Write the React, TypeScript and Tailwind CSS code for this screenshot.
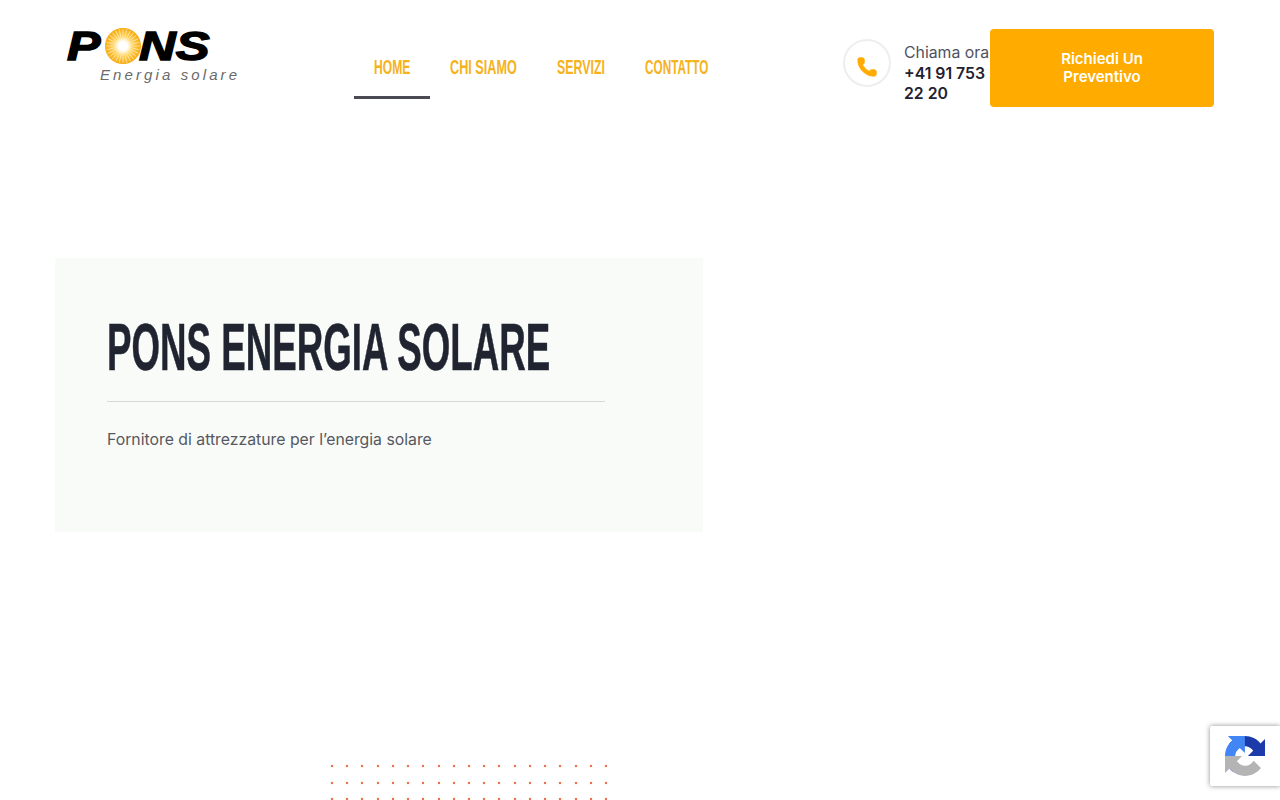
import React from "react";
import { Phone } from "lucide-react";

const navItems = [
  { label: "HOME", width: "w-[36px]", scale: "scale-x-[0.576]", active: true },
  { label: "CHI SIAMO", width: "w-[67px]", scale: "scale-x-[0.603]", active: false },
  { label: "SERVIZI", width: "w-[48px]", scale: "scale-x-[0.59]", active: false },
  { label: "CONTATTO", width: "w-[63px]", scale: "scale-x-[0.56]", active: false },
];

const SunLogo = () => {
  const rays = Array.from({ length: 28 }, (_, i) => (i * 360) / 28);
  return (
    <svg viewBox="0 0 36 36" className="h-[36px] w-[36px] shrink-0">
      <defs>
        <radialGradient id="sun">
          <stop offset="0.28" stopColor="#ffffff" />
          <stop offset="0.5" stopColor="#ffd666" />
          <stop offset="1" stopColor="#f7a90c" />
        </radialGradient>
      </defs>
      <circle cx="18" cy="18" r="18" fill="url(#sun)" />
      {rays.map((deg) => (
        <line
          key={deg}
          x1="18"
          y1="18"
          x2="18"
          y2="1"
          stroke="#fff3cf"
          strokeWidth="0.6"
          transform={`rotate(${deg} 18 18)`}
        />
      ))}
      <circle cx="18" cy="18" r="5" fill="#ffffff" />
    </svg>
  );
};

const Recaptcha = () => (
  <svg viewBox="0 0 64 64" className="h-[40px] w-[40px]">
    <path
      d="M64 31.955l-.033-1.37V4.687l-7.16 7.16C50.948 4.674 42.033.093 32.05.093c-10.4 0-19.622 4.96-25.458 12.64l11.736 11.86a15.55 15.55 0 0 1 4.754-5.334c2.05-1.6 4.952-2.906 8.968-2.906.485 0 .86.057 1.135.163 4.976.393 9.288 3.14 11.828 7.124l-8.307 8.307L64 31.953"
      fill="#1c3aa9"
    />
    <path
      d="M31.862.094l-1.37.033H4.594l7.16 7.16C4.58 13.147 0 22.06 0 32.046c0 10.4 4.96 19.622 12.64 25.458l11.86-11.736a15.55 15.55 0 0 1-5.334-4.754c-1.6-2.05-2.906-4.952-2.906-8.968 0-.485.057-.86.163-1.135.393-4.976 3.14-9.288 7.124-11.828l8.307 8.307L31.86.095"
      fill="#4285f4"
    />
    <path
      d="M.001 32.045l.033 1.37v25.898l7.16-7.16c5.86 7.173 14.774 11.754 24.76 11.754 10.4 0 19.622-4.96 25.458-12.64l-11.736-11.86a15.55 15.55 0 0 1-4.754 5.334c-2.05 1.6-4.952 2.906-8.968 2.906-.485 0-.86-.057-1.135-.163-4.976-.393-9.288-3.14-11.828-7.124l8.307-8.307c-10.522.001-22.4.001-27.295-.001"
      fill="#b4b4b4"
    />
  </svg>
);

const App: React.FC = () => {
  const dots = Array.from({ length: 57 }, (_, i) => i);

  return (
    <div className="relative h-[800px] overflow-hidden bg-white font-['Inter',sans-serif]">
      <header className="flex h-[107px] items-start">
        {/* logo */}
        <div className="ml-[67px] mt-[28px] w-[173px] shrink-0">
          <div className="flex h-[36px] items-center text-[40px] font-bold italic leading-none text-black [-webkit-text-stroke:1.4px_black] font-['Liberation_Sans',sans-serif]">
            <span className="w-[38px] origin-left scale-x-[1.25]">P</span>
            <SunLogo />
            <span className="-ml-[2px] w-[72px] origin-left scale-x-[1.27] whitespace-nowrap">NS</span>
          </div>
          <div className="ml-[33px] mt-[3px] whitespace-nowrap text-[15px] italic leading-[16px] tracking-[3.1px] text-[#6a6a6a] font-['Liberation_Sans',sans-serif]">
            Energia solare
          </div>
        </div>

        {/* nav */}
        <nav className="ml-[114px] mt-[36px] flex h-[63px]">
          {navItems.map((item) => (
            <a
              key={item.label}
              className={`h-full px-5 pt-[20px] ${item.active ? "border-b-[3px] border-[#4a4a55]" : ""}`}
            >
              <span
                className={`block ${item.width} ${item.scale} origin-left whitespace-nowrap text-[21px] font-bold leading-[22px] text-[#f5b21d] font-['Liberation_Sans_Narrow',sans-serif]`}
              >
                {item.label}
              </span>
            </a>
          ))}
        </nav>

        {/* contact */}
        <div className="ml-[115px] mt-[39px] flex">
          <div className="flex h-[48px] w-[48px] items-center justify-center rounded-full border-2 border-[#eeeeee] pt-[8px]">
            <Phone className="h-[22px] w-[22px] text-[#ffab00]" fill="#ffab00" strokeWidth={1} />
          </div>
          <div className="ml-[13px] mt-[4px] w-[86px] text-[15.8px] leading-[20px]">
            <div className="whitespace-nowrap text-[#4f5261]">Chiama ora</div>
            <div className="mt-px font-semibold text-[#1f2230]">+41 91 753 22 20</div>
          </div>
        </div>

        <button className="mt-[29px] flex h-[78px] w-[224px] items-center justify-center rounded-[4px] bg-[#ffab00] px-16 text-center text-[15px] font-semibold leading-[18px] text-white">
          Richiedi Un Preventivo
        </button>
      </header>

      <main>
        <section className="ml-[55px] mt-[151px] h-[274px] w-[648px] bg-[#f9fbf9] pl-[52px] pt-[56px]">
          <h1 className="w-[498px] origin-left scale-x-[0.556] whitespace-nowrap text-[66px] font-bold leading-[66px] text-[#1f2430] [-webkit-text-stroke:0.6px_#1f2430] font-['Liberation_Sans_Narrow',sans-serif]">
            PONS ENERGIA SOLARE
          </h1>
          <div className="mt-[21px] h-px w-[498px] bg-[#d8d8d8]" />
          <p className="mt-[28px] text-[15.8px] leading-[20px] text-[#55585f]">
            Fornitore di attrezzature per l’energia solare
          </p>
        </section>

        <div className="ml-[331px] mt-[233px] grid w-[276px] grid-cols-[repeat(19,2px)] justify-between gap-y-[14.5px]">
          {dots.map((d) => (
            <span key={d} className="h-[2px] w-[2px] rounded-full bg-[#e5482a] shadow-[0_0_2px_rgba(255,150,90,0.7)]" />
          ))}
        </div>
      </main>

      {/* recaptcha badge */}
      <div className="absolute left-[1210px] top-[726px] flex h-[60px] w-[70px] items-center justify-center rounded-l-[2px] bg-white shadow-[0_0_5px_rgba(128,128,128,0.9)]">
        <Recaptcha />
      </div>
    </div>
  );
};

export default App;
